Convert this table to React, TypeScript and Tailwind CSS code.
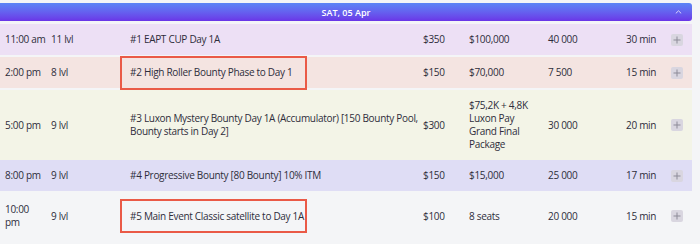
import React from "react"

// --- Types ---
interface Event {
  time: string[]
  levels: string
  name: string[]
  buyIn: string
  guarantee: string[]
  stack: string
  duration: string
  bg: string
  gap: string
  pad: string
  marked?: boolean
}

const events: Event[] = [
  {
    time: ["11:00 am"], levels: "11 lvl", name: ["#1 EAPT CUP Day 1A"], buyIn: "$350",
    guarantee: ["$100,000"], stack: "40 000", duration: "30 min",
    bg: "bg-[#ede0f5]", gap: "mb-[2px]", pad: "py-[9px]",
  },
  {
    time: ["2:00 pm"], levels: "8 lvl", name: ["#2 High Roller Bounty Phase to Day 1"], buyIn: "$150",
    guarantee: ["$70,000"], stack: "7 500", duration: "15 min",
    bg: "bg-[#f4e4e1]", gap: "mb-[2px]", pad: "py-[9px]", marked: true,
  },
  {
    time: ["5:00 pm"], levels: "9 lvl",
    name: ["#3 Luxon Mystery Bounty Day 1A (Accumulator) [150 Bounty Pool,", "Bounty starts in Day 2]"],
    buyIn: "$300", guarantee: ["$75,2K + 4,8K", "Luxon Pay", "Grand Final", "Package"],
    stack: "30 000", duration: "20 min",
    bg: "bg-[#f3f4e7]", gap: "", pad: "py-[9px]",
  },
  {
    time: ["8:00 pm"], levels: "9 lvl", name: ["#4 Progressive Bounty [80 Bounty] 10% ITM"], buyIn: "$150",
    guarantee: ["$15,000"], stack: "25 000", duration: "17 min",
    bg: "bg-[#dfddf5]", gap: "", pad: "py-[9px]",
  },
  {
    time: ["10:00", "pm"], levels: "9 lvl", name: ["#5 Main Event Classic satellite to Day 1A"], buyIn: "$100",
    guarantee: ["8 seats"], stack: "20 000", duration: "15 min",
    bg: "bg-transparent", gap: "", pad: "py-3", marked: true,
  },
]

const Lines = ({ lines }: { lines: string[] }) => (
  <div>
    {lines.map((l, i) => (
      <div key={i} className="whitespace-nowrap">{l}</div>
    ))}
  </div>
)

export default function App() {
  return (
    <div
      className="w-[700px] min-h-[244px] bg-[#f4f5f7] pt-[3px] text-[10px] leading-[13px] tracking-[-0.3px] text-[#2e2d3b]"
      style={{ fontFamily: '"Open Sans", "Noto Sans", sans-serif' }}
    >
      {/* Day header */}
      <div className="w-[692px] h-[18px] mb-[3px] rounded-r-[3px] bg-gradient-to-b from-[#5a84f6] to-[#6a34e7] flex items-center justify-center relative">
        <span className="text-white text-[9px] font-semibold tracking-[0px]">SAT, 05 Apr</span>
        <svg className="absolute right-[10px] top-[7px]" width="7" height="4" viewBox="0 0 7 4" fill="none">
          <polyline points="0.8,3.4 3.5,0.8 6.2,3.4" stroke="#d9d4fb" strokeWidth="1" />
        </svg>
      </div>

      {/* Rows */}
      {events.map((e, i) => (
        <div
          key={i}
          className={`w-[692px] pl-[5px] grid grid-cols-[46px_79px_293px_46px_79px_78px_47px_12px] items-center ${e.bg} ${e.gap} ${e.pad}`}
        >
          <Lines lines={e.time} />
          <div>{e.levels}</div>
          <div className="relative">
            {e.marked && (
              <span className="absolute left-[-10px] top-1/2 -translate-y-1/2 w-[187px] h-[34px] border-2 border-[#ea5a47]" />
            )}
            <Lines lines={e.name} />
          </div>
          <div>{e.buyIn}</div>
          <Lines lines={e.guarantee} />
          <div>{e.stack}</div>
          <div>{e.duration}</div>
          <button className="w-[12px] h-[12px] -ml-[2px] rounded-[2px] bg-[#d9d6e0] flex items-center justify-center">
            <svg width="8" height="8" viewBox="0 0 8 8">
              <path d="M4 0.5v7M0.5 4h7" stroke="#8d8b98" strokeWidth="1" />
            </svg>
          </button>
        </div>
      ))}
    </div>
  )
}
